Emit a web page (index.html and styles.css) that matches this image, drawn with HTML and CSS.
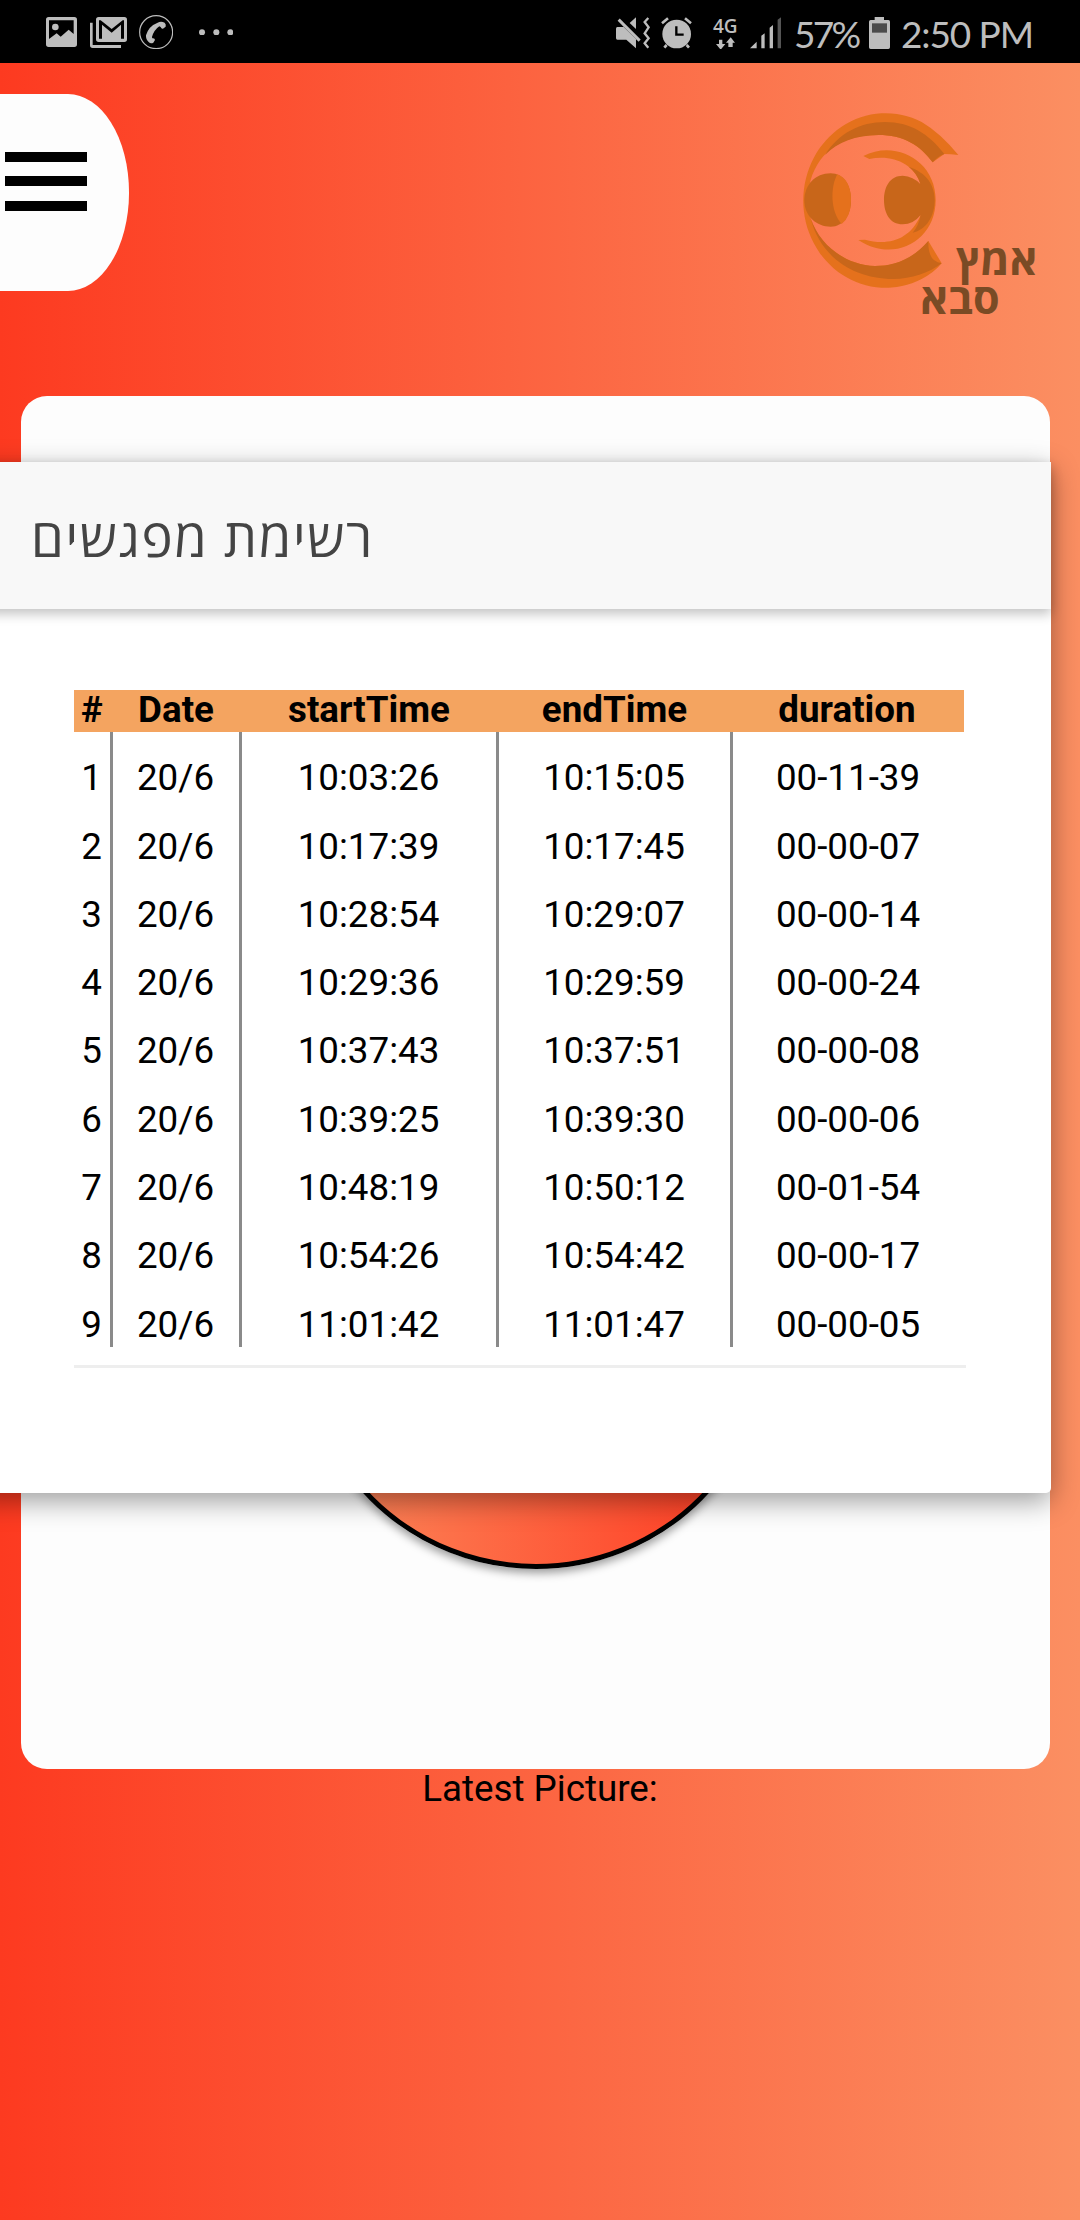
FILE: index.html
```html
<!DOCTYPE html>
<html lang="en">
<head>
<meta charset="utf-8">
<title>Meetings</title>
<link rel="stylesheet" href="styles.css">
</head>
<body>
<div class="screen">
  <div class="status">
    <svg class="ic-photo" viewBox="138 51 93 90" width="31" height="30"><path fill-rule="evenodd" d="M146 51h77q8 0 8 8v74q0 8-8 8h-77q-8 0-8-8V59q0-8 8-8zM147 61v56l23-17 12 10 24-21 15 13V61z"/><circle cx="166" cy="81" r="10"/></svg>
    <svg class="ic-mail" viewBox="270 51 111 93" width="37" height="31"><path fill-rule="evenodd" d="M296 51h77q8 0 8 8v59q0 8-8 8h-77q-8 0-8-8V59q0-8 8-8zM297 61v55h9V74l29 24 28-24v42h9V61h-4l-33 26-33-26z"/><path d="M270 68h8v67h85v9h-85q-8 0-8-8z"/></svg>
    <svg class="ic-call" viewBox="415 45 103 103" width="34.3" height="34.3"><circle cx="466.500" cy="96.500" r="49.500" fill="none" stroke="#bdbdbd" stroke-width="3.500"/><path d="M471 68q10-5 21 0 5 4 3 12l-8 6q-5 1-7-5l-4-2q-16 11-22 32l1 4q8-1 8 5l-5 8q-8 4-14-2-9-7-8-20 8-28 35-38z"/></svg>
    <svg class="ic-more" viewBox="596 86 104 20" width="34.7" height="6.700"><circle cx="605" cy="96" r="9"/><circle cx="648" cy="96" r="9"/><circle cx="690" cy="96" r="9"/></svg>
    <span class="spacer"></span>
    <svg class="ic-mute" viewBox="48 50 103 96" width="34.3" height="32"><path d="M52 80h19l37 36v28L79 118H52q-4 0-4-5V85q0-5 4-5zM89 68l19-17v35z"/><path d="M56 58l63 63" fill="none" stroke="#bdbdbd" stroke-width="9"/><path d="M145 53l-11 12 12 16-12 18 12 15-12 15 11 13" fill="none" stroke="#bdbdbd" stroke-width="7"/></svg>
    <svg class="ic-alarm" viewBox="181 50 93 96" width="31" height="32"><circle cx="228" cy="101" r="43"/><path d="M184 69l18-15M271 69l-18-15M198 134l-7 8M258 134l7 8" stroke="#bdbdbd" stroke-width="8"/><path d="M227 78v25h22" fill="none" stroke="#000" stroke-width="7"/></svg>
    <span class="net"><span>4G</span><svg viewBox="341 109 56 38" width="18.7" height="12.700"><path d="M350 117h10v13h9l-14 17-14-17h9zM378 139h13v-13h7l-13-16-14 16h7z"/></svg></span>
    <svg class="ic-signal" viewBox="446 51 94 95" width="31.3" height="31.7"><path d="M446 145l20-20v20zM480 107l10-7v45h-10zM505 83l10-8v70h-10z"/><path d="M529 59l11-8v94h-11z" fill="#555"/></svg>
    <span class="pct">57%</span>
    <svg class="ic-batt" viewBox="807 50 63 96" width="21" height="32"><path d="M824 50h28v9h13q5 0 5 5v77q0 5-5 5h-53q-5 0-5-5V64q0-5 5-5h12z"/><path d="M816 69h45v28h-45z" fill="#4b4b4b"/></svg>
    <span class="clock">2:50 PM</span>
  </div>

  <div class="topbar">
    <div class="menu"><i></i><i></i><i></i></div>
    <svg class="logo" viewBox="60 60 720 620" width="240" height="206.700">
      <path fill="#e5711c" d="M535 195Q480 128 425 96A247 262 0 1 0 425 567Q462 548 485 520L445 453C395 512 340 528 285 528C200 525 120 470 92 385L78 330L92 270C120 180 190 135 295 135C370 135 420 165 458 217L493 192Q512 192 535 195z"/>
      <path fill="#c8661a" d="M135 195C175 130 240 96 315 96C390 96 445 130 493 192Q475 198 458 217C420 165 370 135 295 135C225 137 175 155 135 195zM92 385C120 470 200 525 285 528C340 528 395 510 445 453Q443 515 485 520C445 550 395 567 340 567C220 567 120 500 92 385z"/>
      <path fill="#c8661a" d="M73 330C74 285 105 250 152 250C190 250 213 285 213 330S190 410 152 410C110 410 73 380 73 330z"/>
      <path fill="#e5711c" d="M172 253C198 263 213 290 213 330Q213 380 185 402C150 365 151 290 172 253z"/>
      <path fill="#e5711c" d="M250 198C345 148 467 210 467 330C467 455 340 520 235 450L255 449C325 468 390 450 422 375V282C402 220 335 192 268 207z"/>
      <path fill="#c8661a" d="M386 230C440 248 464 285 464 330C464 380 438 420 398 428Q416 408 422 375Q400 403 368 403C330 403 312 370 312 330S330 257 368 257Q400 259 421 282Q412 250 386 230z"/>
      <g class="logo-text"><text x="528" y="556" textLength="244" lengthAdjust="spacingAndGlyphs">אמץ</text><text x="421" y="671" textLength="238" lengthAdjust="spacingAndGlyphs">סבא</text></g>
    </svg>
  </div>

  <div class="card"><div class="dial"></div></div>
  <div class="latest">Latest Picture:</div>

  <div class="modal">
    <div class="modal-head">רשימת מפגשים</div>
    <div class="modal-body">
      <table>
        <colgroup><col class="c1"><col class="c2"><col class="c3"><col class="c4"><col class="c5"></colgroup>
        <thead><tr><th>#</th><th>Date</th><th>startTime</th><th>endTime</th><th>duration</th></tr></thead>
        <tbody>
          <tr><td>1</td><td>20/6</td><td>10:03:26</td><td>10:15:05</td><td>00-11-39</td></tr>
          <tr><td>2</td><td>20/6</td><td>10:17:39</td><td>10:17:45</td><td>00-00-07</td></tr>
          <tr><td>3</td><td>20/6</td><td>10:28:54</td><td>10:29:07</td><td>00-00-14</td></tr>
          <tr><td>4</td><td>20/6</td><td>10:29:36</td><td>10:29:59</td><td>00-00-24</td></tr>
          <tr><td>5</td><td>20/6</td><td>10:37:43</td><td>10:37:51</td><td>00-00-08</td></tr>
          <tr><td>6</td><td>20/6</td><td>10:39:25</td><td>10:39:30</td><td>00-00-06</td></tr>
          <tr><td>7</td><td>20/6</td><td>10:48:19</td><td>10:50:12</td><td>00-01-54</td></tr>
          <tr><td>8</td><td>20/6</td><td>10:54:26</td><td>10:54:42</td><td>00-00-17</td></tr>
          <tr><td>9</td><td>20/6</td><td>11:01:42</td><td>11:01:47</td><td>00-00-05</td></tr>
        </tbody>
      </table>
      <div class="rule"></div>
    </div>
  </div>
</div>
</body>
</html>
```
FILE: styles.css
```css
* { box-sizing: border-box; }
body { margin: 0; font-family: Roboto, "Open Sans", sans-serif; font-size: 36.75px; color: #000; }
.screen { position: relative; width: 1080px; height: 2220px; overflow: hidden; background: linear-gradient(90deg, #fd3a20 0%, #fb8f62 100%); }

.status { height: 63px; background: #000; color: #bdbdbd; display: flex; align-items: flex-start; padding: 0 48px 0 46px; font-family: Lato, sans-serif; }
.status svg { display: block; fill: #bdbdbd; flex: none; }
.status > svg { margin-top: 17px; }
.spacer { flex: 1; }
.status .ic-mail { margin-left: 13px; }
.status .ic-call { margin: 15px 0 0 11.5px; }
.status .ic-more { margin: 28.7px 0 0 26px; }
.status .ic-alarm { margin-left: 10px; }
.net { width: 27px; margin: 17px 0 0 20px; display: flex; flex-direction: column; align-items: center; font: 600 19px/18px "Open Sans", sans-serif; gap: 1.5px; }
.status .ic-signal { margin-left: 11px; }
.pct, .clock { font-size: 37px; line-height: 44px; white-space: nowrap; margin-top: 12px; }
.pct { width: 64px; margin-left: 13px; letter-spacing: -2.7px; }
.status .ic-batt { margin-left: 11px; }
.clock { width: 131px; margin-left: 11px; letter-spacing: -1.1px; }

.topbar { height: 333px; display: flex; justify-content: space-between; align-items: flex-start; padding: 31px 40px 0 0; }
.menu { width: 129px; height: 197px; background: #fdfdfd; border-radius: 0 61px 61px 0 / 0 98px 98px 0; padding: 57.500px 0 0 5px; display: flex; flex-direction: column; gap: 14.300px; }
.menu i { display: block; width: 81.500px; height: 10.300px; background: #000; }
.logo { margin-top: 16px; overflow: visible; }
.logo-text { font: 700 128px "Open Sans", sans-serif; fill: #7a4b25; }

.card { margin: 0 30px 0 21px; height: 1373px; padding-top: 703px; background: #fdfdfd; border-radius: 26px; }
.dial { width: 470px; height: 470px; margin: 0 0 0 280px; border: 5px solid #000; border-radius: 50%; background: linear-gradient(270deg, #ff3820 0%, #fc8a5c 100%); box-shadow: 0 4px 10px rgba(0,0,0,.4); }
.latest { line-height: 40px; text-align: center; }

.modal { position: absolute; left: -30px; top: 462px; width: 1080.500px; height: 1031px; background: #fff; border-radius: 5px; box-shadow: 0 8px 28px rgba(0,0,0,.38); }
.modal-head { height: 147px; padding: 1px 0 0 61px; background: #f8f8f8; color: #444; font: 400 52.5px/147px "Open Sans", sans-serif; letter-spacing: 1.65px; box-shadow: 0 5px 11px rgba(0,0,0,.24); }
.modal-body { padding: 81px 0 0 103.500px; }
table { width: 890px; table-layout: fixed; border-collapse: separate; border-spacing: 0; text-align: center; line-height: 40px; }
.c1 { width: 39px; } .c2 { width: 129px; } .c3 { width: 257px; } .c4 { width: 234px; } .c5 { width: 231px; }
th { padding: 0 2px 2px 0; background: #f4a460; font-weight: 700; }
td { padding: 26.300px 0 2px; border-right: 3px solid #8a8a8a; }
td:last-child { border-right: 0; }
.rule { width: 892.500px; height: 3px; margin-top: 18.300px; background: #eee; }
```
